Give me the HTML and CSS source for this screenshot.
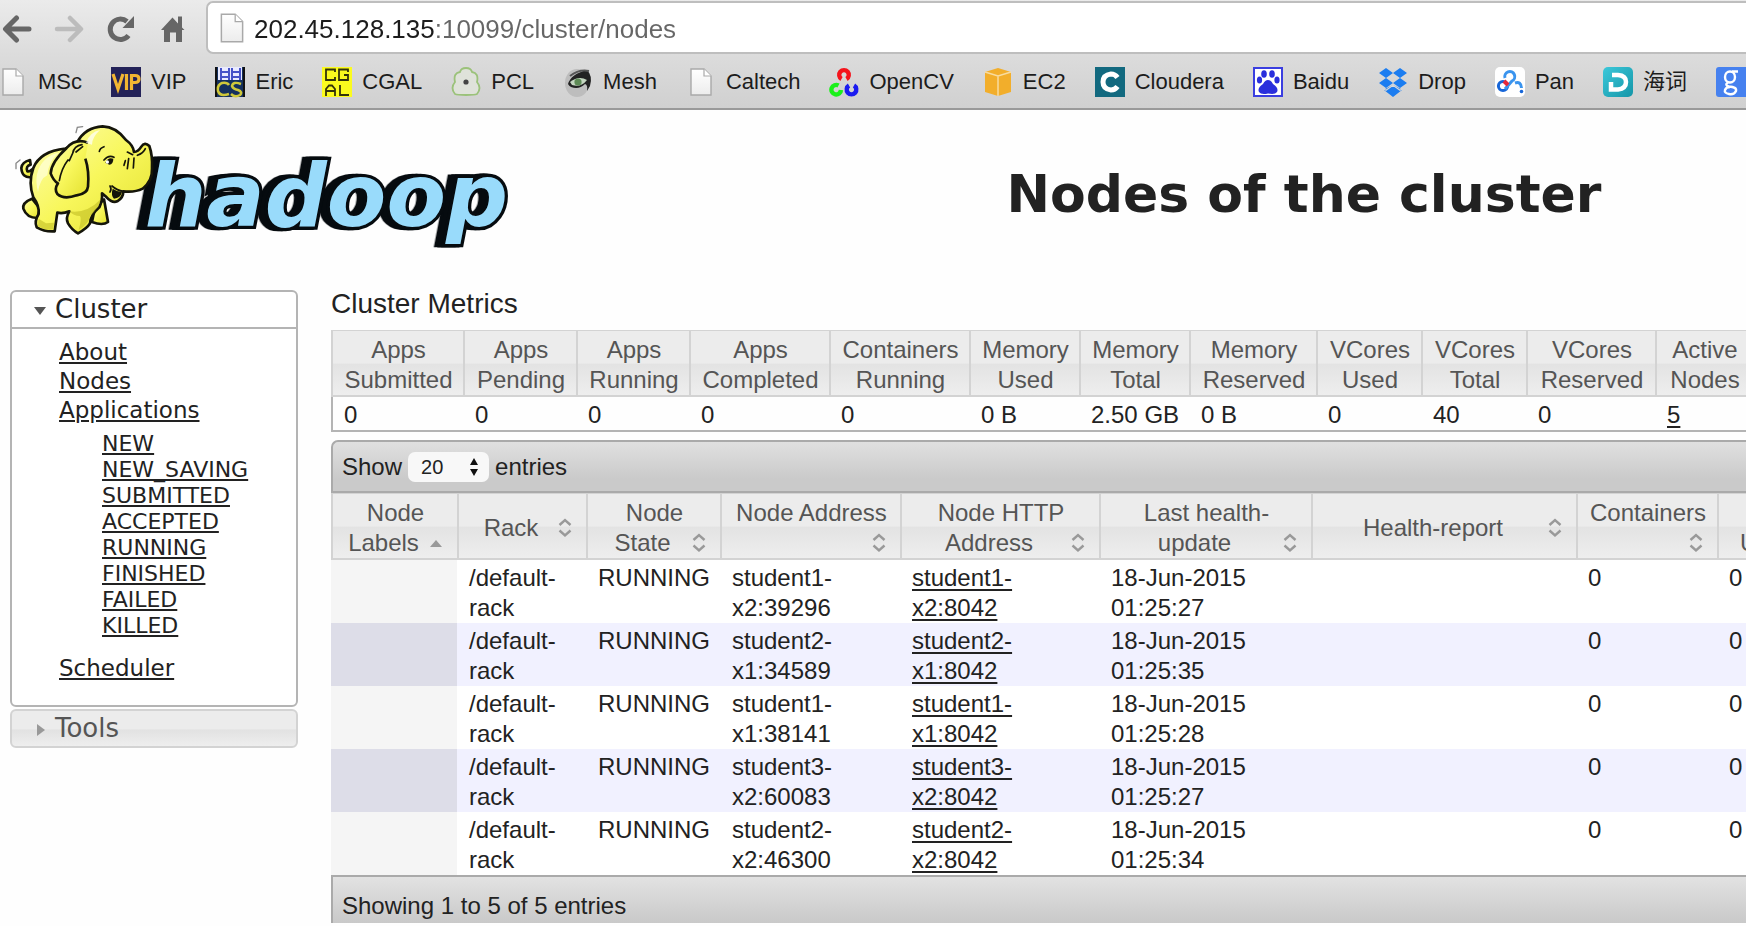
FILE: index.html
```html
<!DOCTYPE html>
<html lang="en">
<head>
<meta charset="utf-8">
<title>Nodes of the cluster</title>
<link rel="stylesheet" href="styles.css">
</head>
<body>
<svg class="defs" aria-hidden="true">
  <defs>
    <linearGradient id="paper" x1="0" y1="0" x2="0" y2="1"><stop offset="0" stop-color="#fff"/><stop offset="1" stop-color="#ececec"/></linearGradient>
    <linearGradient id="teal" x1="0" y1="0" x2="1" y2="1"><stop offset="0" stop-color="#3cc8da"/><stop offset="1" stop-color="#1596a8"/></linearGradient>
    <linearGradient id="skin" x1="0" y1="0" x2="1" y2="1"><stop offset="0" stop-color="#fdfdb0"/><stop offset=".5" stop-color="#f8f75c"/><stop offset="1" stop-color="#e3e02e"/></linearGradient>
    <symbol id="page" viewBox="0 0 30 32"><path d="M5 3H18L25 10V29H5Z" fill="url(#paper)" stroke="#a9a9a9" stroke-width="1.4"/><path d="M18 3V10H25" fill="#fff" stroke="#a9a9a9" stroke-width="1.2"/></symbol>
    <symbol id="sort" viewBox="0 0 24 30"><path d="M6.500 12L12 7L17.500 12M6.500 17.500L12 22.500L17.500 17.500" fill="none" stroke="#999" stroke-width="2.400"/></symbol>
  </defs>
</svg>

<header class="browser">
  <div class="toolbar">
    <nav class="nav-buttons">
      <button class="nav-button" aria-label="Back"><svg viewBox="0 0 30 30"><path d="M27 15H4M14.500 4L3.500 15L14.500 26" fill="none" stroke="#666" stroke-width="5" stroke-linecap="round" stroke-linejoin="round"/></svg></button>
      <button class="nav-button" aria-label="Forward"><svg viewBox="0 0 30 30"><path d="M3 15H26M16 4L27 15L16 26" fill="none" stroke="#bcbcbc" stroke-width="4.500" stroke-linecap="round" stroke-linejoin="round"/></svg></button>
      <button class="nav-button" aria-label="Reload"><svg viewBox="0 0 30 30"><path d="M22.500 21.500A10.200 10.200 0 1 1 21 7.500" fill="none" stroke="#666" stroke-width="5"/><path d="M28 2V14H16.500Z" fill="#666"/></svg></button>
      <button class="nav-button" aria-label="Home"><svg viewBox="0 0 30 30"><path d="M3 16L14.500 3.500L20 9.500V2.500H24V13.500L26.500 16H24V28H18V18.500H12V28H6V16Z" fill="#666"/></svg></button>
    </nav>
    <label class="address"><svg class="address-icon"><use href="#page"/></svg><input class="address-input" type="text" aria-label="Address" value="202.45.128.135:10099/cluster/nodes"></label>
  </div>
  <nav class="bookmarks">
    <a class="bookmark" href="#"><svg class="favicon"><use href="#page"/></svg>MSc</a>
    <a class="bookmark" href="#"><svg class="favicon" viewBox="0 0 30 32"><path d="M0 1H30V31H0Z" fill="#232258"/><path d="M2 8L7 23L12 8M15.500 8V24M20.500 24V9.500H24Q28 9.500 28 13T24 16.500H21" fill="none" stroke="#f2b632" stroke-width="3.200"/></svg>VIP</a>
    <a class="bookmark" href="#"><svg class="favicon" viewBox="0 0 30 32"><path d="M0 1H30V31H0Z" fill="#14305e"/><path d="M3 1H27V14H3Z" fill="#e9eaff"/><path d="M6 2V14M14 2V14M17 2V14M25 2V14M6 6H13M17 6H24M6 11H13M17 11H24" stroke="#4652c8" stroke-width="2"/><path d="M0 1H2V31H0ZM28 1H30V31H28Z" fill="#111"/><path d="M14 19Q12 16 7 17Q2 19 3 25Q5 31 14 28M26 18Q18 15 17 20Q18 23 23 24Q28 26 25 29Q20 32 16 28" fill="none" stroke="#cfc83a" stroke-width="2.500"/></svg>Eric</a>
    <a class="bookmark" href="#"><svg class="favicon" viewBox="0 0 30 32"><path d="M0 1H30V31H0Z" fill="#fbfb1e"/><path d="M13 6V3.500H4V14H13V11M26 6V3.500H17V14H26V9H22M4 30V23L7 19.500H10L13 23V30M4 25H13M18 19V29H27" fill="none" stroke="#33330a" stroke-width="1.800"/></svg>CGAL</a>
    <a class="bookmark" href="#"><svg class="favicon" viewBox="0 0 30 32"><path d="M4 28Q-1 22 4 16Q2 7 9 6Q10 2 15 2T21 6Q28 7 26 16Q31 22 26 28Q24 29 15 29T4 28Z" fill="#dfe2da" stroke="#9bc27a" stroke-width="1.800"/><circle cx="15" cy="16" r="2.600" fill="#444"/></svg>PCL</a>
    <a class="bookmark" href="#"><svg class="favicon" viewBox="0 0 30 32"><ellipse cx="14" cy="17" rx="12" ry="14" fill="#bdbdbd"/><path d="M5 18Q8 8 24 4Q30 10 27 20L24 25Q25 19 22 18Q16 24 8 21Q6 20 5 18Z" fill="#222"/><path d="M7 16Q16 9 24 14Q18 22 9 19Z" fill="#c4d6c0"/><circle cx="15" cy="16" r="3.600" fill="#5d8a55"/><path d="M7 10Q16 3 26 5" fill="none" stroke="#555" stroke-width="2"/></svg>Mesh</a>
    <a class="bookmark" href="#"><svg class="favicon"><use href="#page"/></svg>Caltech</a>
    <a class="bookmark" href="#"><svg class="favicon" viewBox="0 0 30 32" fill="none" stroke-width="4.400"><path d="M12.500 13A4.800 4.800 0 1 1 17.500 13" stroke="#f5141c"/><path d="M9.500 19.500A4.800 4.800 0 1 0 12 24" stroke="#1bf01b"/><path d="M20 19.500A4.800 4.800 0 1 0 25 19.500" stroke="#1b1bf0"/></svg>OpenCV</a>
    <a class="bookmark" href="#"><svg class="favicon" viewBox="0 0 30 32"><path d="M2 6L15 2L28 6V26L15 30L2 26Z" fill="#f2ae2b"/><path d="M2 6L15 10L28 6M15 10V30" fill="none" stroke="#f8dca0" stroke-width="1.500"/></svg>EC2</a>
    <a class="bookmark" href="#"><svg class="favicon" viewBox="0 0 30 32"><path d="M0 1H30V31H0Z" fill="#12697f"/><path d="M22.500 11.500Q20 8 16 8Q8 9 8 16T16 24Q20 24 22.500 20.500" fill="none" stroke="#fff" stroke-width="5"/></svg>Cloudera</a>
    <a class="bookmark" href="#"><svg class="favicon" viewBox="0 0 30 32"><path d="M1 2H29V30H1Z" fill="#fff" stroke="#3a3ee0" stroke-width="2"/><g fill="#2a2fdc"><ellipse cx="11" cy="8" rx="2.800" ry="3.800"/><ellipse cx="19" cy="8" rx="2.800" ry="3.800"/><ellipse cx="6.500" cy="14" rx="2.600" ry="3.600"/><ellipse cx="24" cy="14" rx="2.600" ry="3.600"/><path d="M15 14Q18 14 20 18Q26 22 24 26Q22 29 15 27.500Q8 29 6 26Q4 22 10 18Q12 14 15 14Z"/></g></svg>Baidu</a>
    <a class="bookmark" href="#"><svg class="favicon" viewBox="0 0 30 32"><path d="M8 2L15 7L8 12L1 7ZM22 2L29 7L22 12L15 7ZM8 12L15 17L8 22L1 17ZM22 12L29 17L22 22L15 17ZM6 24L8 22.500L15 19L22 22.500L24 24L15 31Z" fill="#1c7df0"/><path d="M5 22.500L8 24.200L15 19.200L22 24.200L25 22.500" fill="none" stroke="#d8d8d8" stroke-width="1.200"/></svg>Drop</a>
    <a class="bookmark" href="#"><svg class="favicon" viewBox="0 0 30 32"><rect y="1" width="30" height="30" rx="5" fill="#fff"/><circle cx="8" cy="20" r="4.600" fill="none" stroke="#1766d8" stroke-width="3"/><path d="M10 12A5 5 0 1 1 17 15L10 23M20 17Q26 15 26.500 22" fill="none" stroke="#3a94ee" stroke-width="3"/><path d="M9 15L13 19" stroke="#e6293a" stroke-width="4"/><circle cx="26.500" cy="25.500" r="1.800" fill="#1766d8"/></svg>Pan</a>
    <a class="bookmark" href="#"><svg class="favicon" viewBox="0 0 30 32"><rect y="1" width="30" height="30" rx="5" fill="url(#teal)"/><path d="M9 9H15Q23 9.500 23 16T15 23.500H8V16" fill="none" stroke="#fff" stroke-width="4.500"/></svg>海词</a>
    <a class="bookmark" href="#" aria-label="Google"><svg class="favicon" viewBox="0 0 30 32"><rect y="1" width="34" height="30" rx="3" fill="#4681ef"/><g fill="none" stroke="#fff" stroke-width="2.400"><ellipse cx="14" cy="11" rx="5" ry="5.500"/><path d="M22 5.500H16M12 16.500Q8 19 13 20.500Q21 21 20 25Q18 29 13 28Q8 27 9 24Q10 21 14 21"/></g></svg></a>
  </nav>
</header>

<div class="page-head">
  <svg class="logo" viewBox="0 0 1560 450" role="img" aria-label="hadoop">
    <text class="wordmark" x="434" y="342">hadoop</text>
    <g stroke="#15150a" stroke-width="8" stroke-linejoin="round" fill="url(#skin)">
      <path d="M96 195Q66 200 64 168Q66 150 90 144L92 158Q76 162 82 178Q88 180 96 172Z"/>
      <path d="M96 260Q66 272 70 290Q80 318 112 318L120 290Z"/>
      <path d="M312 262L324 330Q308 342 276 330L284 290Z"/>
      <path d="M196 110Q120 118 100 168Q84 212 100 256Q118 280 116 306Q102 328 110 346Q134 360 164 358L172 302Q188 306 208 298Q196 318 204 334Q216 354 234 364Q262 348 270 334Q272 308 298 286Q308 264 306 244L320 256Q336 274 352 268Q370 258 370 238Q404 242 428 230Q458 206 456 170Q458 130 448 102Q434 88 424 104Q414 120 402 120Q400 100 378 84Q348 44 308 43Q256 46 232 90Z"/>
      <path d="M264 92Q226 78 200 108Q154 150 152 184Q160 206 174 214Q162 232 172 246Q192 264 230 250Q262 246 264 224Q268 176 256 140"/>
    </g>
    <path d="M258 92Q270 60 300 54Q276 76 276 98Z" fill="#fff" opacity=".7"/>
    <path d="M114 240Q98 180 136 142Q156 124 176 122Q144 150 142 190Q120 200 114 240Z" fill="#ffffdd" opacity=".7"/>
    <path d="M208 298Q260 306 302 262Q300 285 270 312Q268 334 236 354Q246 320 240 312Q220 312 208 298ZM116 320L138 334L162 332L160 352Q134 356 114 342Z" fill="#bdb921" opacity=".55"/>
    <g fill="none" stroke="#15150a" stroke-width="5" stroke-linecap="round">
      <path d="M246 98Q222 102 218 124L208 146M248 104L228 120M204 144Q184 170 178 206M298 118Q300 108 312 104M312 144Q326 128 342 136M376 146L372 160M386 140L382 170M402 138L400 168M382 120L398 128M412 130Q430 124 436 110M330 222Q336 232 330 240M370 238Q352 236 336 222"/>
      <path d="M228 62L232 46L248 44M48 170L48 154L60 144" stroke="#888" stroke-width="4"/>
    </g>
    <path d="M316 152Q324 134 340 140Q340 156 328 158Z" fill="#15150a"/><circle cx="322" cy="150" r="5" fill="#fff"/>
    <path d="M338 230Q352 240 366 240Q362 258 342 260Q332 250 338 230Z" fill="#15150a"/>
  </svg>
  <h1 class="page-title">Nodes of the cluster</h1>
</div>

<div class="layout">
  <aside class="sidebar">
    <section class="panel panel-open">
      <button class="panel-head" aria-expanded="true"><span class="caret caret-down"></span>Cluster</button>
      <ul class="menu">
        <li><a href="#">About</a></li>
        <li><a href="#">Nodes</a></li>
        <li><a href="#">Applications</a>
          <ul class="submenu">
            <li><a href="#">NEW</a></li>
            <li><a href="#">NEW_SAVING</a></li>
            <li><a href="#">SUBMITTED</a></li>
            <li><a href="#">ACCEPTED</a></li>
            <li><a href="#">RUNNING</a></li>
            <li><a href="#">FINISHED</a></li>
            <li><a href="#">FAILED</a></li>
            <li><a href="#">KILLED</a></li>
          </ul>
        </li>
        <li><a href="#">Scheduler</a></li>
      </ul>
    </section>
    <section class="panel panel-closed">
      <button class="panel-head" aria-expanded="false"><span class="caret caret-right"></span>Tools</button>
    </section>
  </aside>

  <main class="content">
    <h2 class="section-title">Cluster Metrics</h2>
    <table class="grid metrics">
      <colgroup><col class="m1"><col class="m2"><col class="m2"><col class="m3"><col class="m3"><col class="m4"><col class="m4"><col class="m5"><col class="m6"><col class="m6"><col class="m7"><col class="m8"></colgroup>
      <thead><tr>
        <th>Apps<br>Submitted</th><th>Apps<br>Pending</th><th>Apps<br>Running</th><th>Apps<br>Completed</th><th>Containers<br>Running</th><th>Memory<br>Used</th><th>Memory<br>Total</th><th>Memory<br>Reserved</th><th>VCores<br>Used</th><th>VCores<br>Total</th><th>VCores<br>Reserved</th><th>Active<br>Nodes</th>
      </tr></thead>
      <tbody><tr>
        <td>0</td><td>0</td><td>0</td><td>0</td><td>0</td><td>0 B</td><td>2.50 GB</td><td>0 B</td><td>0</td><td>40</td><td>0</td><td><a href="#">5</a></td>
      </tr></tbody>
    </table>

    <div class="bar bar-top">
      <label for="length">Show</label>
      <span class="picker"><select id="length"><option>20</option></select><svg class="picker-icon" viewBox="0 0 10 18"><path d="M5 0L9 7H1ZM5 18L9 11H1Z" fill="#111"/></svg></span>
      <span>entries</span>
    </div>
    <table class="grid nodes">
      <colgroup><col class="n1"><col class="n2"><col class="n3"><col class="n4"><col class="n5"><col class="n6"><col class="n7"><col class="n8"><col class="n9"></colgroup>
      <thead><tr>
        <th>Node<br>Labels<svg class="sort" viewBox="0 0 24 30"><path d="M6 19L12 12L18 19Z" fill="#999"/></svg></th>
        <th>Rack<svg class="sort"><use href="#sort"/></svg></th>
        <th>Node<br>State<svg class="sort"><use href="#sort"/></svg></th>
        <th>Node Address<svg class="sort"><use href="#sort"/></svg></th>
        <th>Node HTTP<br>Address<svg class="sort"><use href="#sort"/></svg></th>
        <th>Last health-<br>update<svg class="sort"><use href="#sort"/></svg></th>
        <th>Health-report<svg class="sort"><use href="#sort"/></svg></th>
        <th>Containers<svg class="sort"><use href="#sort"/></svg></th>
        <th><br>Used<svg class="sort"><use href="#sort"/></svg></th>
      </tr></thead>
      <tbody>
        <tr><td></td><td>/default-<br>rack</td><td>RUNNING</td><td>student1-<br>x2:39296</td><td><a href="#">student1-<br>x2:8042</a></td><td>18-Jun-2015<br>01:25:27</td><td></td><td>0</td><td>0</td></tr>
        <tr><td></td><td>/default-<br>rack</td><td>RUNNING</td><td>student2-<br>x1:34589</td><td><a href="#">student2-<br>x1:8042</a></td><td>18-Jun-2015<br>01:25:35</td><td></td><td>0</td><td>0</td></tr>
        <tr><td></td><td>/default-<br>rack</td><td>RUNNING</td><td>student1-<br>x1:38141</td><td><a href="#">student1-<br>x1:8042</a></td><td>18-Jun-2015<br>01:25:28</td><td></td><td>0</td><td>0</td></tr>
        <tr><td></td><td>/default-<br>rack</td><td>RUNNING</td><td>student3-<br>x2:60083</td><td><a href="#">student3-<br>x2:8042</a></td><td>18-Jun-2015<br>01:25:27</td><td></td><td>0</td><td>0</td></tr>
        <tr><td></td><td>/default-<br>rack</td><td>RUNNING</td><td>student2-<br>x2:46300</td><td><a href="#">student2-<br>x2:8042</a></td><td>18-Jun-2015<br>01:25:34</td><td></td><td>0</td><td>0</td></tr>
      </tbody>
    </table>
    <div class="bar bar-bottom">Showing 1 to 5 of 5 entries</div>
  </main>
</div>
</body>
</html>
```
FILE: styles.css
```css
* { box-sizing: border-box; }

body {
  margin: 0;
  overflow-x: hidden;
  background: #fefefe;
  color: #222;
  font-family: "Liberation Sans", Arial, "Noto Sans CJK SC", sans-serif;
  font-size: 24px;
  line-height: 30px;
}

a { color: inherit; }
button, input, select { font: inherit; color: inherit; }
.defs { position: absolute; width: 0; height: 0; }

/* Browser chrome */
.browser {
  overflow: hidden;
  background: linear-gradient(#ebebeb, #dcdcdc 50%, #d0d0d0);
  border-bottom: 2px solid #999;
}
.toolbar { display: flex; align-items: center; padding-top: 1px; }
.nav-buttons { display: flex; gap: 22px; padding: 2px 18px 0 2px; }
.nav-button { width: 30px; height: 30px; padding: 0; border: 0; background: none; }
.nav-button svg { display: block; width: 30px; height: 30px; }
.address {
  flex: 1;
  display: flex;
  align-items: center;
  gap: 6px;
  height: 53px;
  padding-left: 8px;
  border: 2px solid #bebebe;
  border-right: 0;
  border-radius: 7px 0 0 7px;
  background: #fff;
}
.address-icon { width: 32px; height: 34px; }
.address-input {
  flex: 1;
  min-width: 0;
  padding: 2px 0 0;
  border: 0;
  outline: 0;
  font-size: 26px;
  background: linear-gradient(90deg, #1c1c1c 180px, #666 180px);
  background-clip: text;
  -webkit-background-clip: text;
  -webkit-text-fill-color: transparent;
}
.bookmarks { display: flex; gap: 29px; margin-left: -2px; padding: 12px 0 10px; }
.bookmark {
  flex: none;
  display: flex;
  align-items: center;
  gap: 10px;
  font-size: 22px;
  line-height: 32px;
  color: #1c1c1c;
  text-decoration: none;
}
.favicon { width: 30px; height: 32px; }

/* Page heading */
.page-head { display: flex; height: 173px; }
.logo { flex: none; width: 520px; height: 150px; margin-top: 2px; }
.wordmark {
  font-family: "DejaVu Sans", Verdana, sans-serif;
  font-size: 260px;
  font-weight: bold;
  font-style: italic;
  fill: #99dbfb;
  stroke: #060b0f;
  stroke-width: 20px;
  stroke-linejoin: miter;
  paint-order: stroke;
  filter: drop-shadow(-12px 0 0 #060b0f) drop-shadow(-10px 0 0 #060b0f);
}
.page-title {
  flex: 1;
  margin: 0;
  padding: 51px 0 0 342px;
  font-family: "DejaVu Sans", Verdana, sans-serif;
  font-size: 52px;
  line-height: 66px;
  text-align: center;
  white-space: nowrap;
}

.layout { display: flex; align-items: flex-start; gap: 33px; padding-left: 10px; }

/* Sidebar */
.sidebar {
  flex: none;
  display: grid;
  gap: 2px;
  width: 288px;
  margin-top: 7px;
  font-family: "DejaVu Sans", Verdana, sans-serif;
}
.panel { border: 2px solid #b4b4b4; border-radius: 6px; overflow: hidden; background: #fff; }
.panel-closed { border-color: #d3d3d3; color: #555; background: linear-gradient(#ececec 50%, #e2e2e2 55%, #eee); }
.panel-head {
  display: flex;
  align-items: center;
  width: 100%;
  padding: 0;
  border: 0;
  background: none;
  font-size: 26px;
  line-height: 35px;
}
.panel-open .panel-head { border-bottom: 2px solid #b4b4b4; }
.caret { width: 12px; margin: 2px 9px 0 22px; }
.caret-down { border: 6px solid transparent; border-top: 8px solid #555; border-bottom: 0; }
.caret-right { height: 12px; border: 6px solid transparent; border-left: 8px solid #999; border-right: 0; margin-left: 25px; margin-right: 6px; }
.menu, .submenu { margin: 0; padding: 0; list-style: none; }
.menu { padding: 9px 0 22px 47px; font-size: 23px; line-height: 29px; }
.menu a { text-decoration-thickness: 2px; text-underline-offset: 2px; }
.submenu { padding: 6px 0 15px 43px; font-size: 22px; line-height: 26px; }

/* Tables */
.content { flex: 1; min-width: 0; }
.section-title { margin: 5px 0 10px; font-size: 28px; font-weight: normal; line-height: 32px; }
.grid { width: max-content; border-collapse: separate; border-spacing: 0; table-layout: fixed; }
.grid th {
  padding: 4px 9px 0 10px;
  border: 0 solid #d3d3d3;
  border-width: 1px 0 2px 2px;
  background: linear-gradient(#ececec 50%, #e3e3e3 52%, #eee);
  color: #555;
  font-weight: normal;
  white-space: nowrap;
}
.grid td { padding: 3px 10px 0 12px; text-align: left; vertical-align: top; white-space: nowrap; }
.grid a { text-decoration-thickness: 2px; text-underline-offset: 3px; }
.metrics { width: 1421px; border: 0 solid #b4b4b4; border-width: 0 0 2px; margin-bottom: 8px; }
.metrics td:first-child { border-left: 2px solid #b4b4b4; padding-left: 11px; }
.nodes { width: 1509px; }
.nodes tbody td { background: #fff; }
.nodes tbody td:first-child { background: #f5f5f5; }
.nodes tbody tr:nth-child(even) td { background: #f1f1ff; }
.nodes tbody tr:nth-child(even) td:first-child { background: #dddde8; }
.sort { float: right; width: 24px; height: 30px; }
.m1 { width: 132px; } .m2 { width: 113px; } .m3 { width: 140px; } .m4 { width: 110px; }
.m5 { width: 127px; } .m6 { width: 105px; } .m7 { width: 129px; } .m8 { width: 97px; }
.n1 { width: 126px; } .n2 { width: 129px; } .n3 { width: 134px; } .n4 { width: 180px; } .n5 { width: 199px; }
.n6 { width: 212px; } .n7 { width: 265px; } .n8 { width: 141px; } .n9 { width: 123px; }

.bar {
  display: flex;
  align-items: center;
  gap: 6px;
  padding: 0 9px;
  border: 2px solid #aaa;
  border-right: 0;
  background: linear-gradient(#e0e0e0, #cacaca 75%);
}
.bar-top { height: 53px; border-radius: 7px 0 0; }
.bar-bottom { height: 48px; margin-bottom: 4px; padding-top: 12px; border-bottom: 0; background: linear-gradient(#e2e2e2, #c9c9c9); }
.picker { position: relative; display: flex; }
.picker select {
  appearance: none;
  width: 81px;
  height: 30px;
  padding: 0 13px;
  border: 0;
  border-radius: 7px;
  background: #f8f8f8;
  font-size: 20px;
}
.picker-icon { position: absolute; top: 6px; right: 10px; width: 10px; height: 18px; pointer-events: none; }
```
